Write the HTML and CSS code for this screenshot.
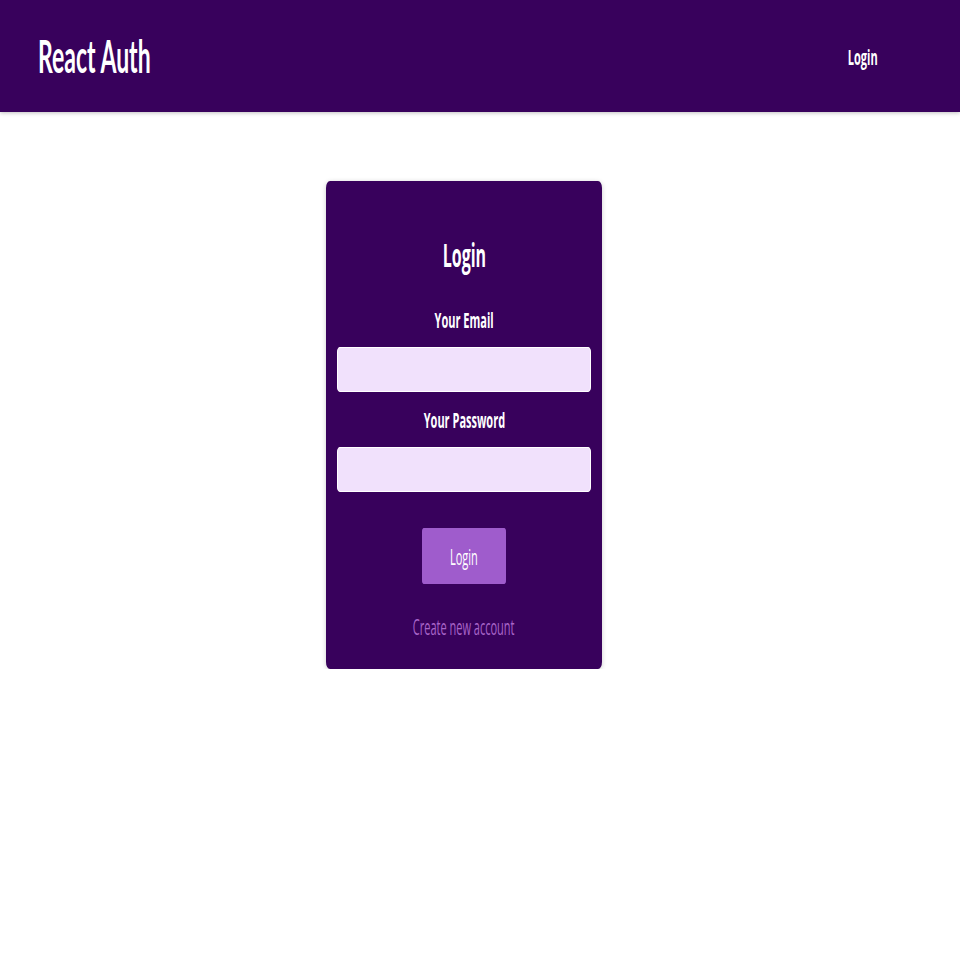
FILE: index.html
```html
<!DOCTYPE html>
<html lang="en">
<head>
<meta charset="utf-8">
<title>React Auth</title>
<link rel="stylesheet" href="styles.css">
</head>
<body>
<header class="header">
  <a class="logo" href="#"><span class="sx sx-left">React Auth</span></a>
  <nav class="nav"><a href="#"><span class="sx sx-right">Login</span></a></nav>
</header>
<main>
  <section class="auth">
    <h1 class="auth-title"><span class="sx">Login</span></h1>
    <form class="auth-form">
      <div class="control">
        <label for="email"><span class="sx">Your Email</span></label>
        <input type="email" id="email">
      </div>
      <div class="control">
        <label for="password"><span class="sx">Your Password</span></label>
        <input type="password" id="password">
      </div>
      <div class="actions">
        <button type="button" class="btn"><span class="sx">Login</span></button>
        <button type="button" class="toggle"><span class="sx">Create new account</span></button>
      </div>
    </form>
  </section>
</main>
</body>
</html>
```
FILE: styles.css
```css
* { box-sizing: border-box; }

html, body {
  margin: 0;
  padding: 0;
  background: #ffffff;
  font-family: "Open Sans", "Noto Sans", sans-serif;
}

.sx {
  display: inline-block;
  transform: scaleX(0.5);
  transform-origin: center center;
  white-space: nowrap;
}
.sx-left { transform-origin: left center; }
.sx-right { transform-origin: right center; }

.header {
  height: 112px;
  background: #38015c;
  display: flex;
  align-items: center;
  justify-content: space-between;
  padding: 0 82px 0 38px;
  box-shadow: 0 1px 4px rgba(0, 0, 0, 0.25);
  position: relative;
}

.logo {
  font-family: Lato, "Open Sans", sans-serif;
  font-weight: 700;
  font-size: 46px;
  line-height: 56px;
  color: #ffffff;
  text-decoration: none;
}

.nav a {
  font-weight: 700;
  font-size: 22px;
  line-height: 28px;
  color: #ffffff;
  text-decoration: none;
  display: block;
}

.auth {
  width: 276px;
  margin: 69px 0 0 326px;
  background: #38015c;
  border-radius: 4px / 7px;
  box-shadow: 0 1px 5px rgba(0, 0, 0, 0.2);
  padding: 16px 11px 30px;
  text-align: center;
  color: #ffffff;
}

.auth-title {
  margin: 38px 0 0;
  font-size: 32px;
  line-height: 40px;
  font-weight: 700;
}

.auth-form {
  margin-top: 32px;
}

.control {
  display: flex;
  flex-direction: column;
  align-items: stretch;
}
.control + .control { margin-top: 15px; }

.control label {
  display: block;
  font-weight: 700;
  font-size: 22px;
  line-height: 24px;
  color: #ffffff;
  margin-bottom: 16px;
}

.control input {
  display: block;
  width: 100%;
  height: 45px;
  border: 1px solid #ffffff;
  border-radius: 3px / 5px;
  background: #f1e1fc;
  font: inherit;
  padding: 0 8px;
}

.actions {
  margin-top: 36px;
  display: flex;
  flex-direction: column;
  align-items: center;
}

.btn {
  width: 84px;
  height: 56px;
  border: 1px solid #9f5ccc;
  border-radius: 2px / 4px;
  background: #9f5ccc;
  color: #ffffff;
  font-family: inherit;
  font-size: 22px;
  font-weight: 400;
  padding: 0;
  cursor: pointer;
}

.toggle {
  margin-top: 29px;
  border: none;
  background: transparent;
  color: #a865c9;
  font-family: inherit;
  font-size: 22px;
  line-height: 26px;
  font-weight: 400;
  padding: 0;
  cursor: pointer;
}
```
